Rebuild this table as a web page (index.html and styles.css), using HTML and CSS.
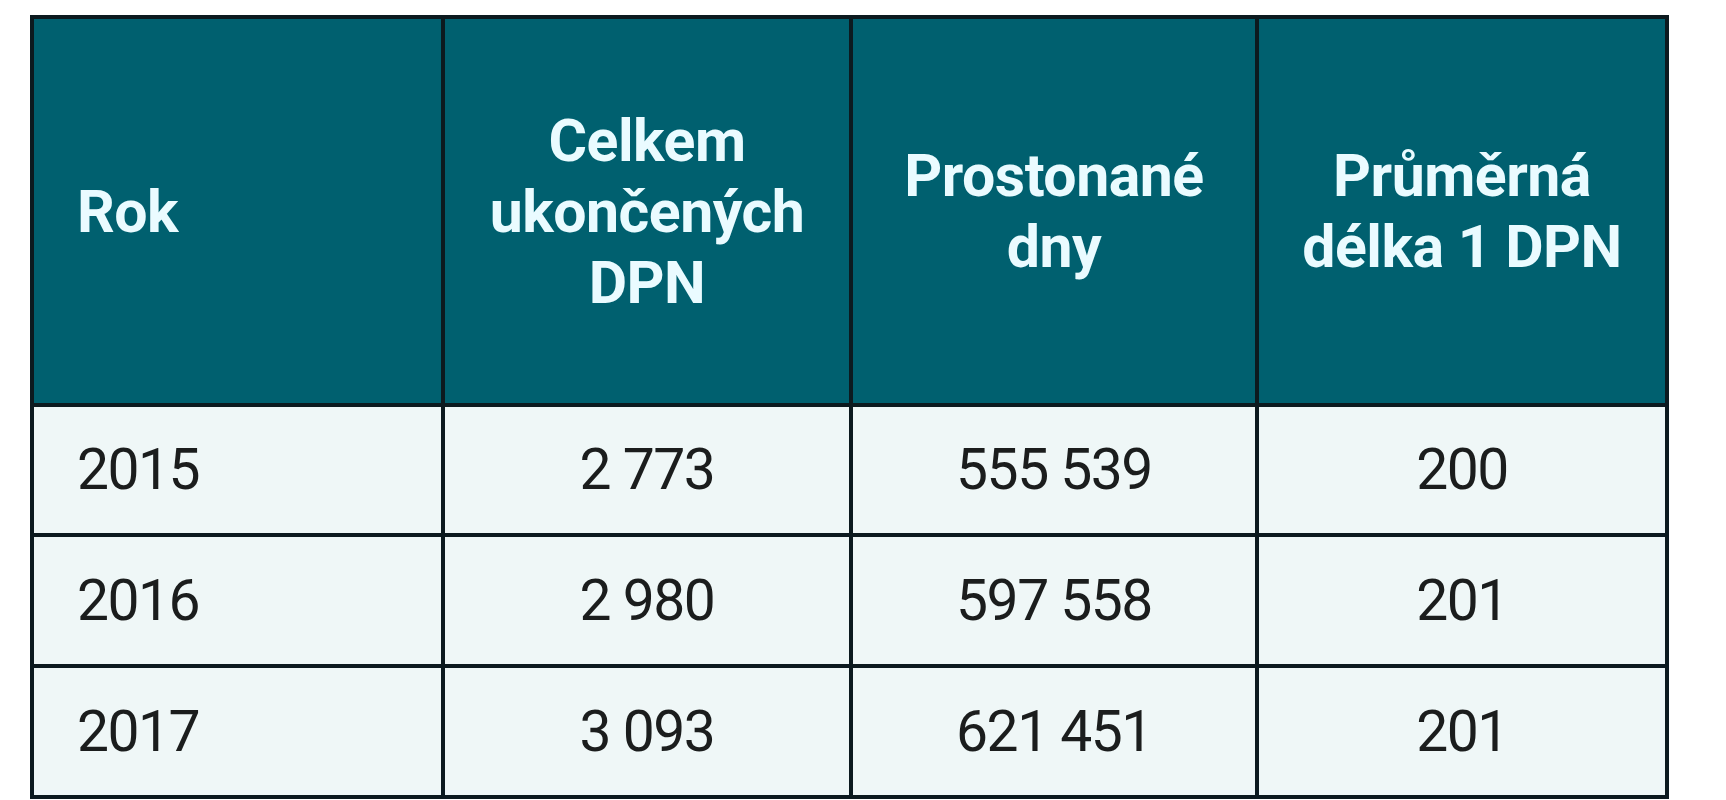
FILE: index.html
```html
<!DOCTYPE html>
<html lang="cs">
<head>
<meta charset="utf-8">
<title>DPN</title>
<link rel="stylesheet" href="styles.css">
</head>
<body>
<table class="dpn">
  <colgroup>
    <col class="c1">
    <col class="c2">
    <col class="c3">
    <col class="c4">
  </colgroup>
  <thead>
    <tr>
      <th class="first">Rok</th>
      <th>Celkem<br>ukončených<br>DPN</th>
      <th>Prostonané<br>dny</th>
      <th>Průměrná<br>délka 1 DPN</th>
    </tr>
  </thead>
  <tbody>
    <tr class="r1">
      <td class="first">2015</td>
      <td>2 773</td>
      <td>555 539</td>
      <td>200</td>
    </tr>
    <tr>
      <td class="first">2016</td>
      <td>2 980</td>
      <td>597 558</td>
      <td>201</td>
    </tr>
    <tr>
      <td class="first">2017</td>
      <td>3 093</td>
      <td>621 451</td>
      <td>201</td>
    </tr>
  </tbody>
</table>
</body>
</html>
```
FILE: styles.css
```css
html, body {
  margin: 0;
  padding: 0;
  background: #ffffff;
}

body {
  padding: 15px 0 0 30px;
  font-family: Roboto, "Liberation Sans", sans-serif;
}

.dpn {
  table-layout: fixed;
  width: 1639px;
  border-collapse: separate;
  border-spacing: 4px;
  background: #0c1a1f;
}

.c1 { width: 407px; }
.c2 { width: 404px; }
.c3 { width: 402px; }
.c4 { width: 406px; }

.dpn th,
.dpn td {
  padding: 0;
  text-align: center;
  vertical-align: middle;
}

.dpn th {
  height: 384px;
  background: #00606f;
  color: #eafbff;
  font-weight: 700;
  font-size: 59px;
  line-height: 71px;
  letter-spacing: -0.5px;
}

.dpn td {
  height: 127px;
  background: #eff7f7;
  color: #1b1d1d;
  font-weight: 400;
  font-size: 57px;
  line-height: 60px;
  letter-spacing: -1.5px;
}

.dpn .r1 td {
  height: 126px;
}

.dpn .first {
  text-align: left;
  padding-left: 43px;
}
```
